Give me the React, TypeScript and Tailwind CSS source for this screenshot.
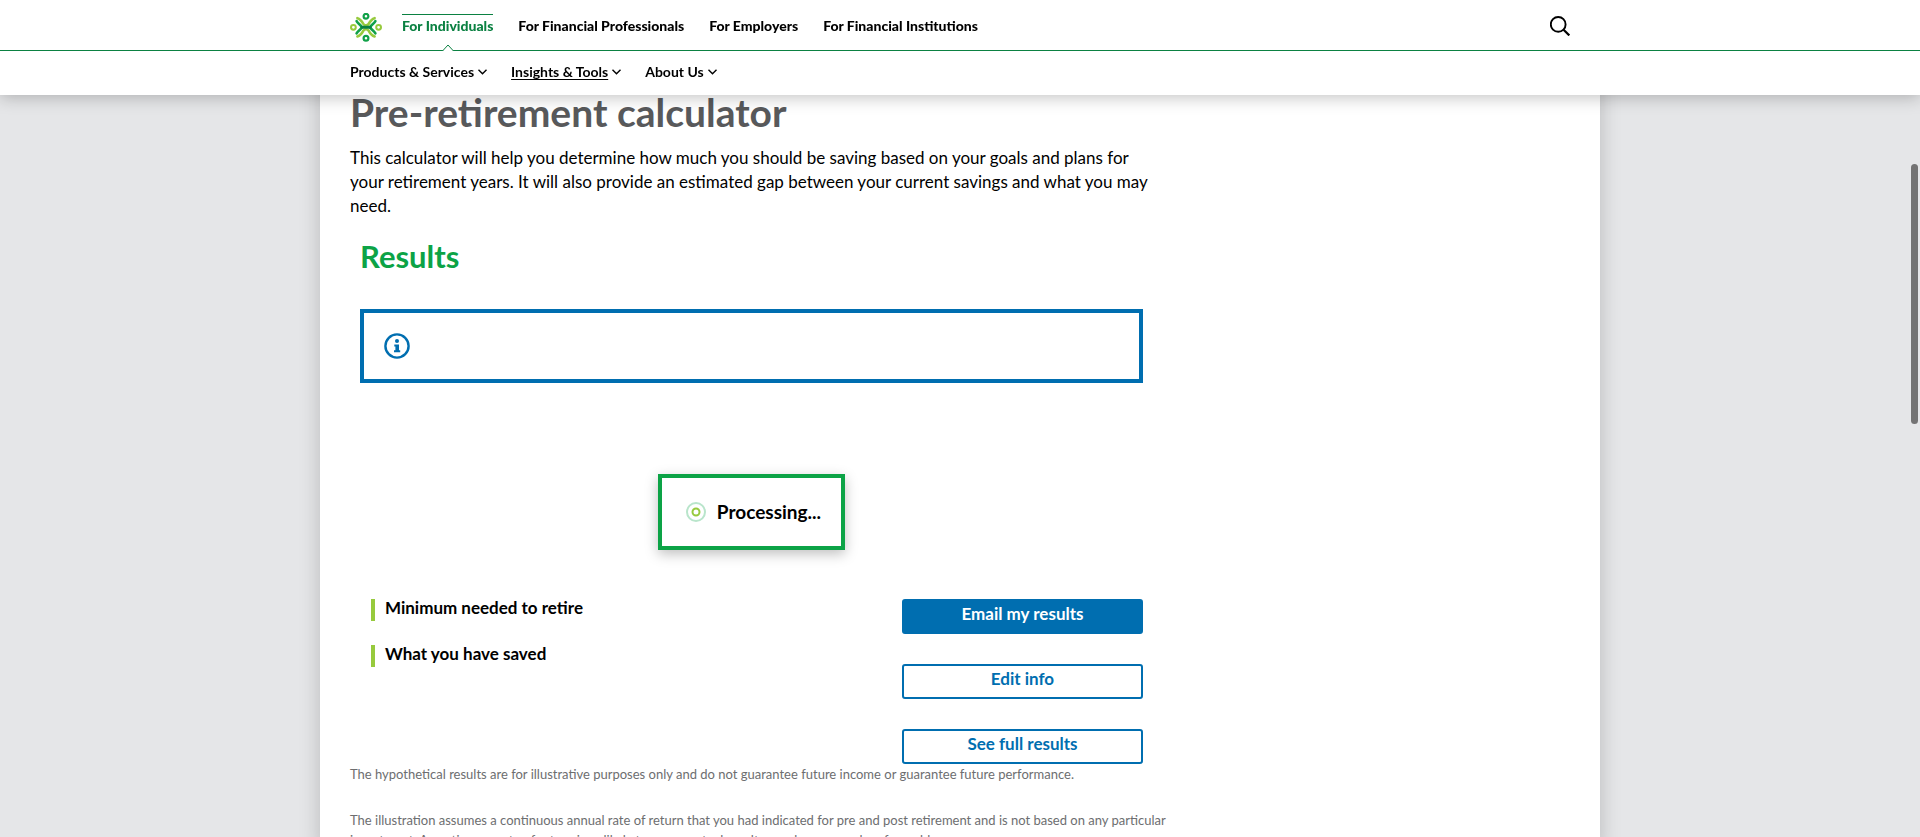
import type { ReactNode } from "react";

const audiences = [
  "For Individuals",
  "For Financial Professionals",
  "For Employers",
  "For Financial Institutions",
];

const sections = ["Products & Services", "Insights & Tools", "About Us"];

function Logo() {
  return (
    <svg width="32" height="30" viewBox="0 0 32 30" fill="none" strokeLinecap="round" aria-hidden="true">
      <g stroke="#97ca3d" strokeWidth="2.6">
        <path d="M7.4 5.2C10.4 6 12 8.4 13.4 11C14.4 12.8 17.6 12.8 18.6 11C20 8.4 21.6 6 24.6 5.2" />
        <path d="M7.4 23.4C10.4 22.6 12 20.2 13.4 17.6C14.4 15.8 17.6 15.8 18.6 17.6C20 20.2 21.6 22.6 24.6 23.4" />
        <circle cx="3.4" cy="14.3" r="2.4" strokeWidth="2" />
        <circle cx="28.6" cy="14.3" r="2.4" strokeWidth="2" />
      </g>
      <g stroke="#11a149" strokeWidth="2.6">
        <path d="M6.6 8.2C8 10.8 10 11.2 12 14.3C10 17.4 8 17.8 6.6 20.4" />
        <path d="M25.4 8.2C24 10.8 22 11.2 20 14.3C22 17.4 24 17.8 25.4 20.4" />
        <circle cx="16" cy="3.3" r="2.4" strokeWidth="2.2" />
        <circle cx="16" cy="25.3" r="2.4" strokeWidth="2.2" />
      </g>
      <path d="M12 14.3H20" stroke="#0b8142" strokeWidth="3" />
    </svg>
  );
}

function Chevron() {
  return (
    <svg width="9" height="6" viewBox="0 0 9 6" fill="none" stroke="black" strokeWidth="1.4" aria-hidden="true">
      <path d="M0.5 0.8L4.5 4.8L8.5 0.8" />
    </svg>
  );
}

function Header() {
  return (
    <header className="fixed inset-x-0 top-0 z-10 bg-white text-sm leading-5 shadow-[0_2px_16px_rgba(0,0,0,0.25)]">
      <div className="border-b border-[#0b8142]">
        <div className="mx-auto flex h-[50px] max-w-[1280px] items-start px-[30px]">
          <a href="#home" aria-label="Home" className="mt-[13px]">
            <Logo />
          </a>
          <nav aria-label="Audience" className="ml-5 flex gap-[25px] pt-3.5 font-black">
            {audiences.map((label, i) => (
              <a
                key={label}
                href="#audience"
                className={
                  i === 0
                    ? "relative border-t border-[#0b8142] pt-px text-[#0b8142]"
                    : "border-t border-transparent pt-px"
                }
              >
                {label}
                {i === 0 && (
                  <svg
                    className="absolute top-[29px] left-1/2 -translate-x-1/2"
                    width="12"
                    height="8"
                    viewBox="0 0 12 8"
                    aria-hidden="true"
                  >
                    <path d="M0.5 7L6 1L11.5 7V8H0.5Z" fill="white" />
                    <path d="M0.5 7L6 1L11.5 7" fill="none" stroke="#0b8142" />
                  </svg>
                )}
              </a>
            ))}
          </nav>
          <button type="button" aria-label="Search" className="mt-4 ml-auto">
            <svg width="20" height="20" viewBox="0 0 20 20" fill="none" stroke="black" aria-hidden="true">
              <circle cx="8.2" cy="8.4" r="7.4" strokeWidth="1.9" />
              <path d="M13.6 13.8L19.3 19.4" strokeWidth="2.2" />
            </svg>
          </button>
        </div>
      </div>
      <nav
        aria-label="Sections"
        className="mx-auto flex h-11 max-w-[1280px] items-center gap-6 px-[30px] pb-0.5 font-bold"
      >
        {sections.map((label, i) => (
          <a key={label} href="#section" className="flex items-center gap-1">
            <span className={i === 1 ? "underline underline-offset-2 [text-decoration-skip-ink:none]" : ""}>
              {label}
            </span>
            <Chevron />
          </a>
        ))}
      </nav>
    </header>
  );
}

function Measure({ children }: { children: ReactNode }) {
  return <h3 className="h-[22px] border-l-4 border-[#97ca3d] pl-2.5 leading-[18px] font-bold">{children}</h3>;
}

function ActionButton({ primary = false, children }: { primary?: boolean; children: ReactNode }) {
  return (
    <button
      type="button"
      className={
        primary
          ? "rounded-[3px] border-2 border-[#006eb0] bg-[#006eb0] pt-px pb-1.5 leading-6 font-bold text-white"
          : "rounded-[3px] border-2 border-[#006eb0] bg-white pt-px pb-1.5 leading-6 font-bold text-[#006eb0]"
      }
    >
      {children}
    </button>
  );
}

export default function App() {
  return (
    <div className="h-screen overflow-hidden bg-[#e5e6e8] font-['Lato',sans-serif] text-[17px] text-black">
      <Header />
      <main className="mx-auto min-h-screen max-w-[1280px] bg-white px-[30px] pt-[88px] shadow-[0_0_20px_rgba(0,0,0,0.2)]">
        <div className="max-w-[803px]">
          <h1 className="text-[39px] leading-[48px] font-bold text-[#58595b]">Pre-retirement calculator</h1>
          <p className="mt-2.5 leading-6">
            This calculator will help you determine how much you should be saving based on your goals and plans for
            your retirement years. It will also provide an estimated gap between your current savings and what you may
            need.
          </p>
          <div className="px-2.5">
            <h2 className="mt-[18px] text-[31px] leading-10 font-bold text-[#0ca346]">Results</h2>
            <div role="note" className="mt-[33px] border-4 border-[#006eb0] px-5 py-5">
              <svg width="26" height="26" viewBox="0 0 26 26" fill="none" aria-label="Information">
                <circle cx="13" cy="13" r="11.6" stroke="#006eb0" strokeWidth="2.4" />
                <circle cx="13" cy="8" r="2" fill="#006eb0" />
                <path d="M10.3 11.4H15V17.2H16.2V19.2H10V17.2H11.4V13.4H10.3Z" fill="#006eb0" />
              </svg>
            </div>
            <div
              role="status"
              className="mx-auto mt-[91px] flex w-fit items-center border-4 border-[#0ca346] bg-white py-[22px] pr-5 pl-6 text-[19px] leading-6 font-bold shadow-[0_4px_12px_rgba(0,0,0,0.25)]"
            >
              <svg width="20" height="20" viewBox="0 0 20 20" fill="none" className="mr-[11px]" aria-hidden="true">
                <circle cx="10" cy="10" r="9" stroke="#b9e5cb" strokeWidth="2" />
                <circle cx="10" cy="10" r="3.5" stroke="#97ca3d" strokeWidth="2" />
              </svg>
              Processing...
            </div>
            <div className="mt-[49px] flex justify-between">
              <div className="ml-[11px] flex flex-col gap-6">
                <Measure>Minimum needed to retire</Measure>
                <Measure>What you have saved</Measure>
              </div>
              <div className="flex w-[241px] flex-col gap-[30px]">
                <ActionButton primary>Email my results</ActionButton>
                <ActionButton>Edit info</ActionButton>
                <ActionButton>See full results</ActionButton>
              </div>
            </div>
          </div>
        </div>
        <div className="flex max-w-[820px] flex-col gap-[26px] text-[13px] leading-5 text-[#6d6e70]">
          <p>
            The hypothetical results are for illustrative purposes only and do not guarantee future income or guarantee
            future performance.
          </p>
          <p>
            The illustration assumes a continuous annual rate of return that you had indicated for pre and post
            retirement and is not based on any particular investment. A continuous rate of return is unlikely to occur;
            actual results may be more or less favorable.
          </p>
        </div>
      </main>
      <div className="fixed top-[164px] right-0.5 h-[260px] w-[7px] rounded-full bg-[#737373]" />
    </div>
  );
}
